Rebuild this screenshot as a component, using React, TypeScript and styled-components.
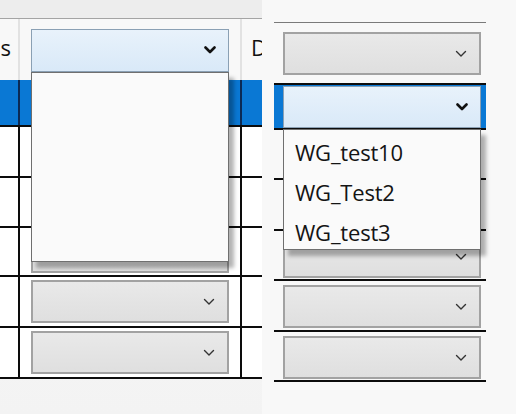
import React from 'react';
import styled, { createGlobalStyle } from 'styled-components';

const GlobalStyle = createGlobalStyle`
  html, body {
    margin: 0;
    padding: 0;
    background: #f6f6f6;
  }
  body {
    font-family: "Open Sans", "Noto Sans", sans-serif;
  }
`;

const Page = styled.div`
  width: 516px;
  height: 414px;
  display: flex;
  overflow: hidden;
  background: #f7f7f7;
`;

const LeftPanel = styled.div`
  position: relative;
  width: 262px;
  height: 100%;
  overflow: hidden;
  background: linear-gradient(#fbfbfb, #f3f3f3);
`;

const TopStrip = styled.div`
  height: 18px;
  background: #ededed;
  border-bottom: 1px solid #a4a4a4;
`;

const Row = styled.div<{ $height: number; $selected?: boolean; $header?: boolean }>`
  display: grid;
  grid-template-columns: 18px 224px 1fr;
  height: ${(p) => p.$height}px;
  background: ${(p) => (p.$selected ? '#0a78d4' : p.$header ? '#f8f8f8' : '#ffffff')};
  border-bottom: ${(p) => (p.$header ? '0' : '2px solid #0c0c0c')};
  box-sizing: border-box;
`;

const Cell = styled.div<{ $mid?: boolean; $header?: boolean; $selected?: boolean }>`
  display: flex;
  align-items: center;
  overflow: hidden;
  box-sizing: border-box;
  ${(p) => {
    const line = p.$header ? '#e2e2e2' : p.$selected ? '#0b2a55' : '#0c0c0c';
    return p.$mid
      ? `border-left: 2px solid ${line}; border-right: 2px solid ${line}; padding-left: 11px;`
      : '';
  }}
`;

const HeaderText = styled.span<{ $align: 'left' | 'right' }>`
  font-family: "Open Sans", sans-serif;
  font-size: 22px;
  color: #111;
  width: 100%;
  text-align: ${(p) => p.$align};
  padding-left: ${(p) => (p.$align === 'left' ? '9px' : '0')};
  padding-right: ${(p) => (p.$align === 'right' ? '7px' : '0')};
  margin-top: -6px;
  white-space: nowrap;
`;

const Combo = styled.div<{ $open?: boolean; $height?: number }>`
  width: 198px;
  height: ${(p) => p.$height ?? 43}px;
  box-sizing: border-box;
  display: flex;
  align-items: center;
  justify-content: flex-end;
  padding-right: 12px;
  border: ${(p) => (p.$open ? '1px solid #8aa0b4' : '2px solid #a2a2a2')};
  background: ${(p) =>
    p.$open ? 'linear-gradient(#e8f2fb, #d9e9f8)' : 'linear-gradient(#e9e9e9, #dfdfdf)'};
`;

const Chevron = ({ bold }: { bold?: boolean }) => (
  <svg width="12" height="8" viewBox="0 0 12 8">
    <path
      d="M1.5 1.5 L6 6 L10.5 1.5"
      fill="none"
      stroke={bold ? '#111' : '#333'}
      strokeWidth={bold ? 2.6 : 1.4}
      strokeLinecap="round"
      strokeLinejoin="round"
    />
  </svg>
);

const Popup = styled.div<{ $top: number; $left: number; $height: number }>`
  position: absolute;
  top: ${(p) => p.$top}px;
  left: ${(p) => p.$left}px;
  width: 198px;
  height: ${(p) => p.$height}px;
  box-sizing: border-box;
  background: #fafafa;
  border: 1px solid #6f6f6f;
  box-shadow: 5px 6px 4px rgba(0, 0, 0, 0.3);
  padding-top: 2px;
`;

const PopupItem = styled.div`
  height: 40px;
  line-height: 40px;
  padding-left: 11px;
  font-family: "Open Sans", "Noto Sans", sans-serif;
  font-size: 22px;
  letter-spacing: -0.2px;
  color: #141414;
`;

const RightPanel = styled.div`
  position: relative;
  flex: 1;
  height: 100%;
  padding-left: 12px;
  box-sizing: border-box;
  background: #f8f8f8;
`;

const RightTable = styled.div`
  width: 212px;
  margin-top: 22px;
  border-top: 1px solid #7a7a7a;
`;

const RRow = styled.div<{ $height: number; $selected?: boolean; $pad?: number }>`
  height: ${(p) => p.$height}px;
  box-sizing: border-box;
  padding: ${(p) => p.$pad ?? 4}px 0 0 9px;
  background: ${(p) => (p.$selected ? '#0a78d4' : 'transparent')};
  border-bottom: 2px solid #0c0c0c;
`;

const leftRows = [51, 50, 49, 51, 51];
const rightRows = [50, 51, 50, 51, 50];

export default function App() {
  return (
    <>
      <GlobalStyle />
      <Page>
        <LeftPanel>
          <TopStrip />
          <Row $height={61} $header>
            <Cell>
              <HeaderText $align="right">s</HeaderText>
            </Cell>
            <Cell $mid $header>
              <Combo $open style={{ marginTop: 1 }}>
                <Chevron bold />
              </Combo>
            </Cell>
            <Cell>
              <HeaderText $align="left">D</HeaderText>
            </Cell>
          </Row>
          <Row $height={47} $selected>
            <Cell />
            <Cell $mid $selected />
            <Cell />
          </Row>
          {leftRows.map((h, i) => (
            <Row key={i} $height={h}>
              <Cell />
              <Cell $mid>
                {i >= 2 && (
                  <Combo>
                    <Chevron />
                  </Combo>
                )}
              </Cell>
              <Cell />
            </Row>
          ))}
          <Popup $top={72} $left={31} $height={190} />
        </LeftPanel>
        <RightPanel>
          <RightTable>
            <RRow $height={62} $pad={9}>
              <Combo>
                <Chevron />
              </Combo>
            </RRow>
            <RRow $height={45} $selected $pad={1}>
              <Combo $open $height={42}>
                <Chevron bold />
              </Combo>
            </RRow>
            {rightRows.map((h, i) => (
              <RRow key={i} $height={h}>
                <Combo>
                  <Chevron />
                </Combo>
              </RRow>
            ))}
          </RightTable>
          <Popup $top={129} $left={21} $height={121}>
            <PopupItem>WG_test10</PopupItem>
            <PopupItem>WG_Test2</PopupItem>
            <PopupItem>WG_test3</PopupItem>
          </Popup>
        </RightPanel>
      </Page>
    </>
  );
}
